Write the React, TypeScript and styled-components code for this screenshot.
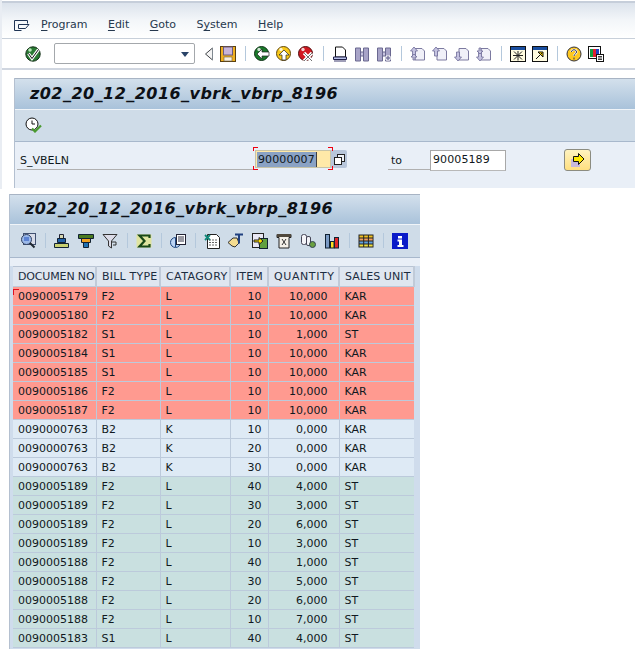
import React from 'react';
import styled, { createGlobalStyle } from 'styled-components';

const GlobalStyle = createGlobalStyle`
  html, body {
    margin: 0;
    padding: 0;
    background: #ffffff;
  }
  body {
    font-family: 'DejaVu Sans', Verdana, sans-serif;
    font-size: 11px;
    color: #101820;
  }
`;

const Page = styled.div`
  width: 638px;
  height: 653px;
  overflow: hidden;
`;

const SapWindow = styled.div`
  height: 189px;
  padding-top: 1px;
  box-sizing: border-box;
  border-left: 2px solid #e9edf3;
`;

const MenuBar = styled.div`
  margin-right: 3px;
  border-top: 2px solid #c6ceda;
  border-bottom: 1px solid #c8d0da;
  background: linear-gradient(#dce3ec 0%, #f3f6f9 50%, #ffffff 100%);
  display: flex;
  align-items: flex-end;
  padding: 0 0 6px 12px;
  height: 29px;
`;

const MenuList = styled.div`
  display: flex;
  gap: 20.5px;
  margin-left: 11px;
`;

const MenuItem = styled.span`
  color: #26384e;
  line-height: 14px;
  u {
    text-underline-offset: 2px;
  }
`;

const MainToolbar = styled.div`
  height: 29px;
  margin-right: 3px;
  border-bottom: 2px solid #d0d6e0;
  display: flex;
  align-items: center;
  padding-left: 20px;
`;

const Slot = styled.span<{ $w?: number }>`
  flex: none;
  width: ${(p) => p.$w ?? 22}px;
  height: 18px;
  display: flex;
  align-items: center;
  justify-content: center;
`;

const Sep = styled.span<{ $w?: number }>`
  flex: none;
  width: ${(p) => p.$w ?? 12}px;
  height: 15px;
  display: flex;
  justify-content: center;
  &::before {
    content: '';
    width: 1px;
    background: #b4c8dc;
  }
`;

const CommandField = styled.div`
  flex: none;
  width: 139px;
  height: 19px;
  margin: 0 5px 0 10px;
  border: 1px solid #a4a8ac;
  border-radius: 2px;
  background: #fff;
  position: relative;
  &::after {
    content: '';
    position: absolute;
    right: 5px;
    top: 8px;
    border: 4px solid transparent;
    border-top: 5px solid #2a4468;
    border-bottom: 0;
  }
`;

const ScreenPanel = styled.div`
  margin: 8px 3px 0 12px;
  border-left: 1px solid #b4c0d0;
  background: #e9eff7;
`;

const TitleBar = styled.div<{ $pad: number; $h: number }>`
  height: ${(p) => p.$h}px;
  padding: 0 0 2px ${(p) => p.$pad}px;
  box-sizing: border-box;
  border-top: 1px solid #a8b4c4;
  background: linear-gradient(#d3e0ec, #a9c2da);
  display: flex;
  align-items: center;
  font-size: 16px;
  font-weight: bold;
  font-style: italic;
  letter-spacing: 0.46px;
  color: #0c1016;
`;

const AppToolbar = styled.div<{ $h: number; $pad: number }>`
  height: ${(p) => p.$h}px;
  padding: 0 0 1px ${(p) => p.$pad}px;
  box-sizing: content-box;
  border-top: 1px solid #f0f4f8;
  border-bottom: 1px solid #a8b8cc;
  background: #cfdce8;
  display: flex;
  align-items: center;
`;

const FormRow = styled.div`
  height: 46px;
  display: flex;
  align-items: flex-start;
  padding-top: 8px;
  box-sizing: border-box;
`;

const FieldLabel = styled.div<{ $w: number; $pl: number; $ml: number }>`
  width: ${(p) => p.$w}px;
  margin-left: ${(p) => p.$ml}px;
  padding: 1px 0 0 ${(p) => p.$pl}px;
  box-sizing: border-box;
  height: 20px;
  line-height: 20px;
  border-bottom: 1px solid #b0b0b0;
  flex: none;
`;

const InputWrap = styled.div`
  position: relative;
  flex: none;
  display: flex;
  margin-left: 2px;
`;

const Corner = styled.span<{ $side: 'left' | 'right' }>`
  position: absolute;
  top: -3px;
  bottom: -2px;
  ${(p) => (p.$side === 'left' ? 'left: -2px;' : 'left: 73px;')}
  width: 5px;
  &::before,
  &::after {
    content: '';
    position: absolute;
    left: 0;
    right: 0;
    height: 3px;
    border-${(p) => p.$side}: 1px solid #f00010;
  }
  &::before {
    top: 0;
    border-top: 1px solid #f00010;
  }
  &::after {
    bottom: 0;
    border-bottom: 1px solid #f00010;
  }
`;

const ActiveInput = styled.div`
  width: 76px;
  height: 18px;
  box-sizing: border-box;
  background: #ffe9a8;
  border: 1px solid #c8c4a8;
  display: flex;
  align-items: center;
  padding-left: 1px;
  span {
    background: #8aa2c4;
    color: #101820;
    padding: 0 1px;
    line-height: 15px;
    border-right: 1px solid #404040;
    letter-spacing: 0.1px;
  }
`;

const HelpButton = styled.div`
  width: 16px;
  height: 18px;
  background: #b8c6da;
  border-radius: 0 2px 2px 0;
  display: flex;
  align-items: center;
  justify-content: center;
`;

const PlainInput = styled.div`
  flex: none;
  width: 76px;
  height: 21px;
  box-sizing: border-box;
  background: #fff;
  border: 1px solid #a8a8a8;
  border-bottom-color: #b8b8b8;
  line-height: 18px;
  padding-left: 2px;
  letter-spacing: 0.1px;
`;

const ExecuteButton = styled.div`
  flex: none;
  width: 27px;
  height: 22px;
  margin: -1px 0 0 58px;
  box-sizing: border-box;
  background: linear-gradient(#fff3c0, #ffdf80);
  border: 1px solid #8c8c80;
  border-radius: 3px;
  display: flex;
  align-items: center;
  justify-content: center;
`;

const ResultPanel = styled.div`
  width: 411px;
  margin: 5px 0 0 9px;
  background: #cfdcec;
  border-left: 1px solid #b4c0d0;
  box-sizing: border-box;
  height: 455px;
`;

const ListArea = styled.div`
  background: linear-gradient(#e9eff7 8px, #cfdcec 8px);
  padding: 8px 5px 0 3px;
`;

const Table = styled.table`
  width: 401px;
  table-layout: fixed;
  border-collapse: collapse;
  color: #101820;
`;

const HeadCell = styled.th<{ $w: number; $track: number }>`
  width: ${(p) => p.$w}px;
  height: 20px;
  padding: 0 0 0 5px;
  box-sizing: border-box;
  font-weight: normal;
  text-align: left;
  white-space: nowrap;
  overflow: hidden;
  letter-spacing: ${(p) => p.$track}px;
  color: #1c2c40;
  background: #dfe6f0;
  border-right: 2px solid #c0cad8;
  border-top: 1px solid #b8c4d4;
`;

const tones = {
  red: '#ff9a90',
  blue: '#deeaf5',
  green: '#c9e0e0',
};

const Cell = styled.td<{ $tone: keyof typeof tones; $pr?: number }>`
  height: 19px;
  padding: 0 ${(p) => p.$pr ?? 0}px 0 ${(p) => (p.$pr ? 0 : 5)}px;
  box-sizing: border-box;
  text-align: ${(p) => (p.$pr ? 'right' : 'left')};
  white-space: nowrap;
  background: ${(p) => tones[p.$tone]};
  border: 1px solid #bccadb;
  &:first-child {
    border-left: 0;
  }
  &:last-child {
    border-right: 0;
  }
`;

const Marker = styled.span`
  position: absolute;
  width: 5px;
  height: 5px;
  margin: -1px 0 0 -5px;
  border-top: 1px solid #e01020;
  border-left: 1px solid #e01020;
`;

// ---- icons, small pixel-style drawings
const Ico = ({ children, w = 16, h = 16 }: { children: React.ReactNode; w?: number; h?: number }) => (
  <svg width={w} height={h} viewBox={`0 0 ${w} ${h}`}>
    {children}
  </svg>
);

const SessionMenu = () => (
  <Ico w={16} h={12}>
    <path d="M13.500 3.500V.5H.5v10h7M4.500 4.500h10.500l-3.500 4h-7z" fill="none" stroke="#1f3454" />
  </Ico>
);

const Check = () => (
  <Ico>
    <circle cx="8" cy="8" r="7.200" fill="#2a7a34" stroke="#102c14" />
    <circle cx="5" cy="4" r="1.800" fill="#b8e8b8" />
    <path d="M3.500 7.500l3.500 5 6.500-9" fill="none" stroke="#fff" strokeWidth="3" />
    <path d="M3.500 7.500l3.500 5 6.500-9" fill="none" stroke="#111" strokeWidth="1" />
  </Ico>
);

const Ball = ({ fill, dark, children }: { fill: string; dark: string; children: React.ReactNode }) => (
  <Ico>
    <circle cx="7.500" cy="7.500" r="7" fill={fill} stroke={dark} />
    <circle cx="5" cy="3.500" r="1.700" fill="#fff" opacity=".8" />
    {children}
  </Ico>
);

const BackTriangle = () => (
  <Ico w={10} h={14}>
    <path d="M8.500 1v12L1.500 7z" fill="#f4f4f4" stroke="#404448" />
    <path d="M8.500 1v12" stroke="#808890" />
  </Ico>
);

const Save = () => (
  <Ico>
    <rect x=".5" y=".5" width="15" height="15" fill="#f0b020" stroke="#5a4010" />
    <rect x="3.500" y="1" width="9" height="8" fill="#c8b4d8" stroke="#6a5a80" />
    <rect x="4" y="11" width="8" height="4" fill="#f8f0e0" stroke="#6a5a40" strokeWidth=".6" />
  </Ico>
);

const Print = () => (
  <Ico>
    <path d="M3.500 1h7l3 3v7h-10z" fill="#fff" stroke="#111" />
    <path d="M1.500 11h13v2.500h-13z" fill="#b8c0e8" stroke="#20204a" />
    <path d="M2 15h12" stroke="#403f70" />
  </Ico>
);

const Binocular = ({ plus }: { plus?: boolean }) => (
  <Ico>
    <path d="M1.500 2h5v13h-5zM9.500 2h5v13h-5z" fill="#a8a4c8" stroke="#6a6890" />
    <path d="M6.500 6h3v4h-3z" fill="#c8c4e0" stroke="#6a6890" />
    {plus && <path d="M12 9v6M9 12h6" stroke="#fff" strokeWidth="3" />}
    {plus && <path d="M12 9.500v5M9.500 12h5" stroke="#7a78a0" strokeWidth="1.500" />}
  </Ico>
);

const PageArrow = ({ dir, double }: { dir: 'up' | 'down'; double?: boolean }) => (
  <Ico>
    <path d="M5 2.500h7l2.500 2.500v9H5z" fill="#f0f0f8" stroke="#7c7aa0" />
    <path
      d={dir === 'up' ? 'M4 1L.5 5h2v5h3V5h2z' : 'M4 15l-3.500-4h2V6h3v5h2z'}
      fill="#c4c2e0"
      stroke="#6e6c98"
      strokeWidth=".8"
    />
    {double && (
      <path
        d={dir === 'up' ? 'M4 8L1 11h2v3h2v-3h2z' : 'M4 8L1 5h2V2h2v3h2z'}
        fill="#c4c2e0"
        stroke="#6e6c98"
        strokeWidth=".8"
      />
    )}
  </Ico>
);

const WindowBase = ({ children }: { children: React.ReactNode }) => (
  <Ico>
    <rect x=".5" y=".5" width="15" height="15" fill="#fffbe0" stroke="#111" />
    <rect x="1" y="1" width="14" height="3" fill="#1a4ea0" />
    {children}
  </Ico>
);

const Help = () => (
  <Ico>
    <circle cx="8" cy="8" r="7" fill="#ffc820" stroke="#30303c" />
    <path d="M5.500 6c0-3 5-3 5 0 0 2-2.500 2-2.500 4" fill="none" stroke="#fff" strokeWidth="2.200" />
    <path d="M5.500 6c0-3 5-3 5 0 0 2-2.500 2-2.500 4M8 11.500v2" fill="none" stroke="#33304a" strokeWidth="1" />
  </Ico>
);

const Layout = () => (
  <Ico>
    <rect x=".5" y=".5" width="12" height="12" fill="#fff" stroke="#111" />
    <rect x="2" y="3" width="3" height="8" fill="#10a040" />
    <rect x="5" y="3" width="3" height="8" fill="#e02030" />
    <rect x="8" y="3" width="3" height="8" fill="#2040c0" />
    <rect x="8.500" y="8.500" width="7" height="7" fill="#fff" stroke="#111" />
    <path d="M10 10.500h4M10 12h4M10 13.500h4" stroke="#111" strokeWidth=".8" />
  </Ico>
);

const ClockCheck = () => (
  <Ico w={18} h={16}>
    <circle cx="7" cy="7" r="6" fill="#fff" stroke="#111" />
    <path d="M7 3.500V7h3" fill="none" stroke="#111" />
    <path d="M7 11.500l3 3 6-6" fill="none" stroke="#4a9a30" strokeWidth="2.200" />
  </Ico>
);

const Copies = () => (
  <Ico w={11} h={11}>
    <rect x="3.500" y=".5" width="7" height="7" fill="#eef2f8" stroke="#222" />
    <rect x=".5" y="3.500" width="7" height="7" fill="#fff" stroke="#222" />
  </Ico>
);

const RunArrow = () => (
  <Ico>
    <rect x="1" y="7" width="9" height="8" fill="#c8b8dc" />
    <path d="M3.500 4.500h5V1.500L14 7l-5.500 5.500V9.500h-5z" fill="#ffe800" stroke="#111" />
  </Ico>
);

const Magnifier = () => (
  <Ico>
    <rect x="3.500" y=".5" width="12" height="11" fill="#d8dce8" stroke="#405070" />
    <circle cx="6.500" cy="6.500" r="5" fill="#9ab8e8" stroke="#304060" />
    <path d="M4 5h5M4 7h5" stroke="#2050c0" />
    <path d="M10 10l4.500 4.500" stroke="#202830" strokeWidth="2" />
  </Ico>
);

const SortAsc = () => (
  <Ico>
    <path d="M5.500 1.500h4v4h-4z" fill="#d8d8b0" stroke="#223" />
    <path d="M3.500 5.500h8v4h-8z" fill="#2060a8" stroke="#123" />
    <path d="M.5 10.500h14v4H.5z" fill="#c8d070" stroke="#123" />
  </Ico>
);

const SortDesc = () => (
  <Ico>
    <path d="M.5 1.500h15v4H.5z" fill="#4a7a20" stroke="#123" />
    <path d="M3.500 5.500h9v4h-9z" fill="#f0a020" stroke="#123" />
    <path d="M5.500 9.500h5v5h-5z" fill="#2070b0" stroke="#123" />
  </Ico>
);

const Funnel = () => (
  <Ico>
    <path d="M1 1.500h14L9.500 8v7l-3-2V8z" fill="#dcdce8" stroke="#333" />
    <path d="M10 9h4v3h-3" fill="none" stroke="#333" />
  </Ico>
);

const Sigma = () => (
  <Ico>
    <rect x=".5" y="1.500" width="15" height="13" fill="#dfe4a0" />
    <path d="M13.500 5V2.500H3.500L8.500 8l-5 5.500h10V11" fill="none" stroke="#184818" strokeWidth="2.200" />
  </Ico>
);

const Details = () => (
  <Ico>
    <circle cx="5.500" cy="9.500" r="5" fill="#bcd4f4" stroke="#204880" />
    <path d="M5.500 5v9" stroke="#204880" />
    <rect x="6.500" y="1.500" width="9" height="10" fill="#fff" stroke="#223" />
    <path d="M8 4h6M8 6h6M8 8h6" stroke="#334" />
  </Ico>
);

const Grid = () => (
  <Ico>
    <path d="M3.500 1.500h9l3 3v11h-12z" fill="#fff" stroke="#222" />
    <path d="M5 7h9M5 9.500h9M5 12h9" stroke="#666" strokeDasharray="2 1" />
    <path d="M1 2l5 5M6 2L1 7" stroke="#108878" strokeWidth="1.800" />
  </Ico>
);

const Hand = () => (
  <Ico w={18} h={16}>
    <path d="M1 9.500L6 5h4l2 5-4 4-3-1z" fill="#f4dc90" stroke="#333" />
    <path d="M8 1.500h8M12 1.500v9" stroke="#1f3f7f" strokeWidth="2" />
  </Ico>
);

const Export = () => (
  <Ico>
    <rect x=".5" y=".5" width="11" height="14" fill="#e8e8f4" stroke="#222" />
    <rect x="7.500" y="5.500" width="8" height="10" fill="#60a040" stroke="#123" />
    <path d="M2 7h5V4.500L11 8l-4 3.500V9H2z" fill="#ffe000" stroke="#222" />
  </Ico>
);

const Doc = () => (
  <Ico>
    <path d="M1 1.500h14v3h-2V15H3V4.500H1z" fill="#f4f0e8" stroke="#222" />
    <rect x="1" y="1" width="14" height="3" fill="#50483c" />
    <path d="M6 6l4 6M10 6l-4 6" stroke="#333" />
  </Ico>
);

const AbcColor = () => (
  <Ico>
    <rect x="1.500" y="1.500" width="5" height="10" rx="2" fill="#f4f4f8" stroke="#445" />
    <rect x="6.500" y="3.500" width="4" height="9" rx="1.500" fill="#f4f4f8" stroke="#445" />
    <circle cx="12.500" cy="11.500" r="3" fill="#6aa040" stroke="#345" />
  </Ico>
);

const Bars = () => (
  <Ico>
    <rect x="1.500" y="1.500" width="4" height="13.500" fill="#7a9ac4" stroke="#123" />
    <rect x="6.500" y="8.500" width="3.500" height="6.500" fill="#ffe020" stroke="#123" />
    <rect x="10.500" y="4.500" width="4" height="10.500" fill="#e02828" stroke="#123" />
  </Ico>
);

const Cells = () => (
  <Ico>
    <rect x=".5" y="1.500" width="15" height="13" fill="#222" />
    {[0, 1, 2, 3].map((r) =>
      [0, 1, 2].map((c) => (
        <rect
          key={`${r}${c}`}
          x={1.500 + c * 4.700}
          y={2.500 + r * 3}
          width="3.700"
          height="2"
          fill={['#f0c020', '#f0a060', '#60a0e0', '#f0e040'][r]}
        />
      )),
    )}
  </Ico>
);

const Info = () => (
  <Ico>
    <rect width="16" height="16" fill="#0a1ac8" />
    <path d="M6 3h4v2.500H6zM5.500 6.500H10V12h1.500v2h-6v-2H7V8.500H5.500z" fill="#fff" />
  </Ico>
);

const reportTitle = 'z02_20_12_2016_vbrk_vbrp_8196';

type Row = [string, string, string, number, string, string];
type Group = { tone: keyof typeof tones; rows: Row[] };

const groups: Group[] = [
  {
    tone: 'red',
    rows: [
      ['0090005179', 'F2', 'L', 10, '10,000', 'KAR'],
      ['0090005180', 'F2', 'L', 10, '10,000', 'KAR'],
      ['0090005182', 'S1', 'L', 10, '1,000', 'ST'],
      ['0090005184', 'S1', 'L', 10, '10,000', 'KAR'],
      ['0090005185', 'S1', 'L', 10, '10,000', 'KAR'],
      ['0090005186', 'F2', 'L', 10, '10,000', 'KAR'],
      ['0090005187', 'F2', 'L', 10, '10,000', 'KAR'],
    ],
  },
  {
    tone: 'blue',
    rows: [
      ['0090000763', 'B2', 'K', 10, '0,000', 'KAR'],
      ['0090000763', 'B2', 'K', 20, '0,000', 'KAR'],
      ['0090000763', 'B2', 'K', 30, '0,000', 'KAR'],
    ],
  },
  {
    tone: 'green',
    rows: [
      ['0090005189', 'F2', 'L', 40, '4,000', 'ST'],
      ['0090005189', 'F2', 'L', 30, '3,000', 'ST'],
      ['0090005189', 'F2', 'L', 20, '6,000', 'ST'],
      ['0090005189', 'F2', 'L', 10, '3,000', 'ST'],
      ['0090005188', 'F2', 'L', 40, '1,000', 'ST'],
      ['0090005188', 'F2', 'L', 30, '5,000', 'ST'],
      ['0090005188', 'F2', 'L', 20, '6,000', 'ST'],
      ['0090005188', 'F2', 'L', 10, '7,000', 'ST'],
      ['0090005183', 'S1', 'L', 40, '4,000', 'ST'],
    ],
  },
];

const columns: [string, number, number][] = [
  ['DOCUMEN NO', 83, -0.15],
  ['BILL TYPE', 64, 0.2],
  ['CATAGORY', 70, 0.4],
  ['ITEM', 38, 0.1],
  ['QUANTITY', 71, 0.6],
  ['SALES UNIT', 75, 0.1],
];

export default function App() {
  return (
    <Page>
      <GlobalStyle />
      <SapWindow>
        <MenuBar>
          <SessionMenu />
          <MenuList>
            <MenuItem><u>P</u>rogram</MenuItem>
            <MenuItem><u>E</u>dit</MenuItem>
            <MenuItem><u>G</u>oto</MenuItem>
            <MenuItem>S<u>y</u>stem</MenuItem>
            <MenuItem><u>H</u>elp</MenuItem>
          </MenuList>
        </MenuBar>

        <MainToolbar>
          <Slot><Check /></Slot>
          <CommandField />
          <Slot $w={17}><BackTriangle /></Slot>
          <Slot $w={22}><Save /></Slot>
          <Sep />
          <Slot>
            <Ball fill="#1a7a2a" dark="#0c3014">
              <path d="M3 8l5-5v3h7v4H8v3z" fill="#fff" stroke="#222" strokeWidth=".7" />
            </Ball>
          </Slot>
          <Slot>
            <Ball fill="#f8c818" dark="#604810">
              <path d="M8 4l5 5h-3v5H6V9H3z" fill="#fff" stroke="#222" strokeWidth=".7" />
            </Ball>
          </Slot>
          <Slot>
            <Ball fill="#d01820" dark="#501010">
              <path d="M6 7l8 8M14 7l-8 8" stroke="#fff" strokeWidth="3.200" />
              <path d="M6 7l8 8M14 7l-8 8" stroke="#333" strokeWidth=".7" />
            </Ball>
          </Slot>
          <Sep />
          <Slot><Print /></Slot>
          <Slot><Binocular /></Slot>
          <Slot><Binocular plus /></Slot>
          <Sep />
          <Slot><PageArrow dir="up" double /></Slot>
          <Slot><PageArrow dir="up" /></Slot>
          <Slot><PageArrow dir="down" /></Slot>
          <Slot><PageArrow dir="down" double /></Slot>
          <Sep />
          <Slot>
            <WindowBase>
              <path d="M8 5v9.500M3 9.500h10M4 5.500l8 8M12 5.500l-8 8" stroke="#222" />
            </WindowBase>
          </Slot>
          <Slot>
            <WindowBase>
              <path d="M4 13l6-6M6 6h5v5z" stroke="#111" fill="#ffd000" />
            </WindowBase>
          </Slot>
          <Sep />
          <Slot><Help /></Slot>
          <Slot><Layout /></Slot>
        </MainToolbar>

        <ScreenPanel>
          <TitleBar $pad={15} $h={31}>{reportTitle}</TitleBar>
          <AppToolbar $h={30} $pad={10}>
            <Slot $w={18}><ClockCheck /></Slot>
          </AppToolbar>
          <FormRow>
            <FieldLabel $w={236} $pl={3} $ml={2}>S_VBELN</FieldLabel>
            <InputWrap>
              <Corner $side="left" />
              <ActiveInput><span>90000007</span></ActiveInput>
              <Corner $side="right" />
              <HelpButton><Copies /></HelpButton>
            </InputWrap>
            <FieldLabel $w={42} $pl={3} $ml={41}>to</FieldLabel>
            <PlainInput>90005189</PlainInput>
            <ExecuteButton><RunArrow /></ExecuteButton>
          </FormRow>
        </ScreenPanel>
      </SapWindow>

      <ResultPanel>
        <TitleBar $pad={15} $h={30}>{reportTitle}</TitleBar>
        <AppToolbar $h={31} $pad={6}>
          <Slot $w={24}><Magnifier /></Slot>
          <Sep $w={10} />
          <Slot $w={24}><SortAsc /></Slot>
          <Slot $w={24}><SortDesc /></Slot>
          <Slot $w={24}><Funnel /></Slot>
          <Sep $w={10} />
          <Slot $w={24}><Sigma /></Slot>
          <Sep $w={10} />
          <Slot $w={24}><Details /></Slot>
          <Sep $w={10} />
          <Slot $w={24}><Grid /></Slot>
          <Slot $w={24}><Hand /></Slot>
          <Slot $w={24}><Export /></Slot>
          <Slot $w={24}><Doc /></Slot>
          <Slot $w={24}><AbcColor /></Slot>
          <Slot $w={24}><Bars /></Slot>
          <Sep $w={10} />
          <Slot $w={24}><Cells /></Slot>
          <Sep $w={10} />
          <Slot $w={24}><Info /></Slot>
        </AppToolbar>
        <ListArea>
          <Table>
            <thead>
              <tr>
                {columns.map(([name, w, track]) => (
                  <HeadCell key={name} $w={w} $track={track}>{name}</HeadCell>
                ))}
              </tr>
            </thead>
            <tbody>
              {groups.flatMap((g, gi) =>
                g.rows.map((r, ri) => (
                  <tr key={`${gi}-${ri}`}>
                    <Cell $tone={g.tone}>
                      {gi === 0 && ri === 0 && <Marker />}
                      {r[0]}
                    </Cell>
                    <Cell $tone={g.tone}>{r[1]}</Cell>
                    <Cell $tone={g.tone}>{r[2]}</Cell>
                    <Cell $tone={g.tone} $pr={6}>{r[3]}</Cell>
                    <Cell $tone={g.tone} $pr={11}>{r[4]}</Cell>
                    <Cell $tone={g.tone}>{r[5]}</Cell>
                  </tr>
                )),
              )}
            </tbody>
          </Table>
        </ListArea>
      </ResultPanel>
    </Page>
  );
}
